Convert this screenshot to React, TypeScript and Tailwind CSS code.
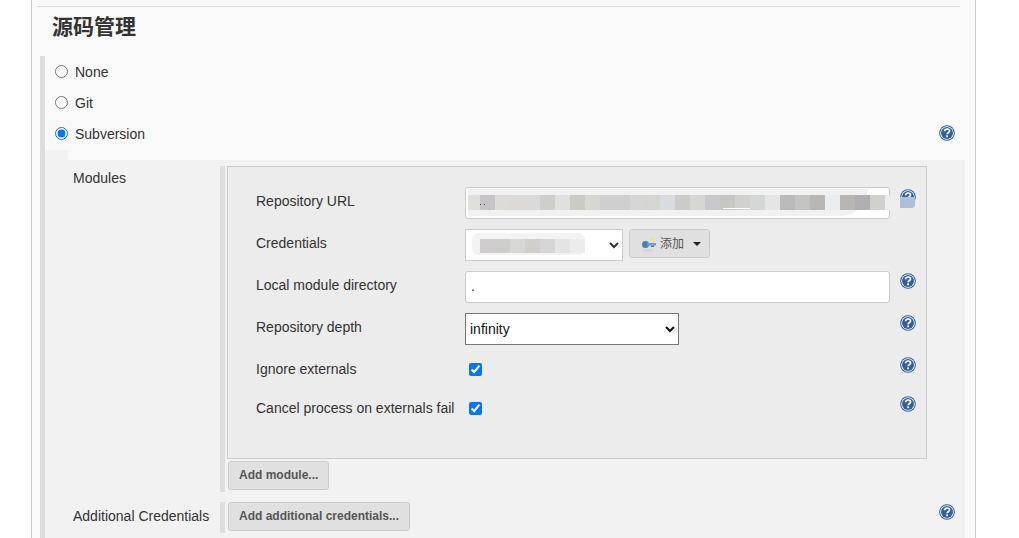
import React from 'react';

const urlTiles = [
  'bg-[#c6c4c6]', 'bg-[#dcdbd8]', 'bg-[#dcd9d7]', 'bg-[#d9dad9]', 'bg-[#cdcfcb]', 'bg-[#e0e1df]', 'bg-[#cbcbc6]',
  'bg-[#d6d6d3]', 'bg-[#ced0cf]', 'bg-[#cfd0ce]', 'bg-[#d6d6d6]', 'bg-[#d5d6d1]', 'bg-[#d8dce0]', 'bg-[#cbcbcb]',
  'bg-[#d6d6d2]', 'bg-[#c8c8cc]', 'bg-[#c6c7c3]', 'bg-[#d1d1cf]', 'bg-[#d3d6d4]', 'bg-[#e5e5e5]', 'bg-[#bcb9ba]',
  'bg-[#c3c3c1]', 'bg-[#b9b7b4]', 'bg-[#ecedef]', 'bg-[#b8b6b3]', 'bg-[#b0aeb0]', 'bg-[#d0d0cc]', 'bg-[#eeeeee]',
];

const credentialTiles = [
  'bg-[#cdcbcb]', 'bg-[#cfcdcc]', 'bg-[#d6d8d5]', 'bg-[#d2cecc]', 'bg-[#d6d4d7]', 'bg-[#e4e4e4]', 'bg-[#ececec]',
];

const HelpIcon = () => (
  <svg width="16" height="16" viewBox="0 0 16 16" className="block shrink-0">
    <circle cx="8" cy="8" r="7.8" fill="#2f5c9c" />
    <circle cx="8" cy="8" r="6.8" fill="#ffffff" />
    <circle cx="8" cy="8" r="6" fill="#34609f" />
    <path d="M5.6 6.2c0-1.4 1.1-2.2 2.5-2.2s2.4.9 2.4 2c0 1.7-2.4 1.8-2.4 3.3" fill="none" stroke="#ffffff" strokeWidth="1.7" />
    <rect x="7.2" y="10.4" width="1.8" height="1.8" fill="#ffffff" />
  </svg>
);

const KeyIcon = () => (
  <svg width="16" height="16" viewBox="0 0 16 16" className="block">
    <ellipse cx="7" cy="14.5" rx="6" ry="1" fill="#d0d0d0" />
    <circle cx="4.5" cy="8.5" r="3.5" fill="#4a7dbd" />
    <rect x="6" y="7" width="9" height="2.6" fill="#6f9fd6" />
    <rect x="10" y="9.5" width="3" height="1.5" fill="#4a7dbd" />
    <circle cx="12" cy="3.6" r="2.2" fill="#f3e56e" />
  </svg>
);

const Label = ({ children }: { children: React.ReactNode }) => (
  <div className="w-[209px] shrink-0 mt-[4px] leading-5 text-[14px]">{children}</div>
);

const AddButton = ({ children }: { children: React.ReactNode }) => (
  <button type="button" className="h-[29px] px-[10px] pb-[2px] bg-[#e0e0e0] border border-[#cccccc] rounded-[3px] text-[12px] font-bold text-[#555555]">
    {children}
  </button>
);

export default function App() {
  return (
    <div className="w-[1019px] h-[538px] overflow-hidden bg-white text-[#333333] font-['Liberation_Sans',Arial,sans-serif]">
      <div className="ml-[31px] w-[945px] h-[538px] bg-[#f9f9f9] border-x border-[#cccccc] pt-[6px]">
        <div className="ml-[5px] w-[923px] h-px bg-[#dddddd]" />
        <h2 className="ml-[20px] h-[49px] pt-[6px] text-[21px] leading-7 font-bold font-['Liberation_Sans','Noto_Sans_CJK_SC',sans-serif]">源码管理</h2>

        <div className="ml-[8px] border-l-[5px] border-[#dddddd] h-[482px]">
          <div className="h-[1px]" />
          <div className="flex items-center h-[31px] pl-[10px] text-[14px]">
            <input type="radio" name="scm" className="mr-[7px] mb-[3px]" />
            <span>None</span>
          </div>
          <div className="flex items-center h-[31px] pl-[10px] text-[14px]">
            <input type="radio" name="scm" className="mr-[7px] mb-[3px]" />
            <span>Git</span>
          </div>
          <div className="flex items-center h-[31px] pl-[10px] pr-[10px] text-[14px] w-[920px]">
            <input type="radio" name="scm" defaultChecked className="mr-[7px] mb-[3px]" />
            <span className="flex-1">Subversion</span>
            <div className="mb-[3px]"><HelpIcon /></div>
          </div>
          <div className="w-[23px] h-[10px] bg-[#f2f2f2]" />

          <div className="w-[920px] h-[379px] bg-[#f2f2f2] pt-[6px]">
            <div className="flex">
              <div className="w-[175px] pl-[28px] text-[14px] leading-5 pt-[2px]">Modules</div>
              <div className="w-[5px] h-[326px] bg-[#dddddd]" />
              <div className="ml-[2px]">
                <div className="w-[700px] h-[293px] bg-[#ececec] border border-[#cccccc] pl-[28px] pt-[20px]">
                  <div className="flex items-start h-[32px]">
                    <Label>Repository URL</Label>
                    <div className="relative w-[425px] h-[32px] bg-white border border-[#cccccc] rounded-[3px]">
                      <input type="text" className="w-full h-full" aria-label="Repository URL" />
                      <div className="absolute left-[2px] top-[1px] w-[400px] h-[27px] bg-[#f1f1f1] rounded-br-[60px]" />
                      <div className="absolute left-[2px] top-[7px] w-[12px] h-[15px] bg-[#dfdfdb]" />
                      <div className="absolute left-[14px] top-[7px] flex">
                        {urlTiles.map((c, i) => (
                          <div key={i} className={`w-[15px] h-[15px] ${c}`} />
                        ))}
                      </div>
                      <div className="absolute left-[14px] top-[16px] flex gap-[3px]">
                        <div className="w-px h-px bg-[#b0106a]" />
                        <div className="w-px h-px bg-[#b0106a]" />
                      </div>
                      <div className="absolute left-[257px] top-[20px] w-[27px] h-px bg-white" />
                    </div>
                    <div className="relative ml-[10px] mt-[2px]">
                      <HelpIcon />
                      <div className="absolute left-0 top-[8px] w-[15px] h-[11px] bg-[#aebfd9] rounded-br-[3px]" />
                    </div>
                  </div>

                  <div className="flex items-start h-[32px] mt-[10px]">
                    <Label>Credentials</Label>
                    <div className="relative">
                      <select className="block w-[158px] h-[32px] bg-white border border-[#cccccc] text-[14px]" aria-label="Credentials">
                        <option></option>
                      </select>
                      <div className="absolute left-[7px] top-[4px] w-[113px] h-[22px] bg-[#f3f3f3] rounded-[6px]" />
                      <div className="absolute left-[15px] top-[10px] flex">
                        {credentialTiles.map((c, i) => (
                          <div key={i} className={`w-[15px] h-[14px] ${c}`} />
                        ))}
                      </div>
                    </div>
                    <button type="button" className="flex items-center ml-[6px] w-[81px] h-[29px] pl-[11px] bg-[#e0e0e0] border border-[#cccccc] rounded-[3px] text-[12px] text-[#555555] font-['Liberation_Sans','Noto_Sans_CJK_SC',sans-serif]">
                      <KeyIcon />
                      <span className="ml-[3px]">添加</span>
                      <span className="ml-[9px] w-0 h-0 border-x-[4px] border-x-transparent border-t-[4px] border-t-[#222222]" />
                    </button>
                  </div>

                  <div className="flex items-start h-[32px] mt-[10px]">
                    <Label>Local module directory</Label>
                    <input type="text" defaultValue="." aria-label="Local module directory" className="w-[425px] h-[32px] bg-white border border-[#cccccc] rounded-[3px] px-[5px] pb-[2px] text-[14px]" />
                    <div className="ml-[10px] mt-[2px]"><HelpIcon /></div>
                  </div>

                  <div className="flex items-start h-[32px] mt-[10px]">
                    <Label>Repository depth</Label>
                    <select className="block w-[214px] h-[32px] bg-white border border-[#767676] text-[14px] text-[#111111]" aria-label="Repository depth">
                      <option>infinity</option>
                    </select>
                    <div className="ml-[221px] mt-[2px]"><HelpIcon /></div>
                  </div>

                  <div className="flex items-start h-[29px] mt-[10px]">
                    <Label>Ignore externals</Label>
                    <div className="w-[425px] pl-[4px] pt-[8px]">
                      <input type="checkbox" defaultChecked className="block" aria-label="Ignore externals" />
                    </div>
                    <div className="ml-[10px] mt-[2px]"><HelpIcon /></div>
                  </div>

                  <div className="flex items-start h-[29px] mt-[10px]">
                    <Label>Cancel process on externals fail</Label>
                    <div className="w-[425px] pl-[4px] pt-[8px]">
                      <input type="checkbox" defaultChecked className="block" aria-label="Cancel process on externals fail" />
                    </div>
                    <div className="ml-[10px] mt-[2px]"><HelpIcon /></div>
                  </div>
                </div>
                <div className="ml-px mt-[2px]">
                  <AddButton>Add module...</AddButton>
                </div>
              </div>
            </div>

            <div className="flex mt-[10px]">
              <div className="w-[175px] pl-[28px] text-[14px] leading-5 pt-[4px]">Additional Credentials</div>
              <div className="w-[5px] h-[31px] bg-[#dddddd]" />
              <div className="ml-[3px] w-[711px]">
                <AddButton>Add additional credentials...</AddButton>
              </div>
              <div className="mt-[2px]"><HelpIcon /></div>
            </div>
          </div>
        </div>
      </div>
    </div>
  );
}
